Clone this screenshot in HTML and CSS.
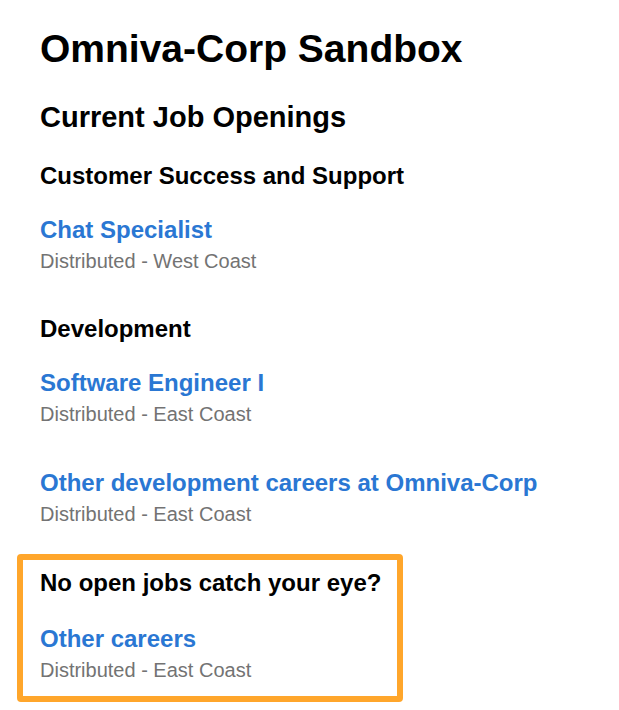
FILE: index.html
```html
<!DOCTYPE html>
<html lang="en">
<head>
<meta charset="utf-8">
<title>Omniva-Corp Sandbox</title>
<link rel="stylesheet" href="styles.css">
</head>
<body>
<main class="page">
  <h1 class="title">Omniva-Corp Sandbox</h1>
  <h2 class="subtitle">Current Job Openings</h2>

  <section class="dept">
    <h3 class="dept-name">Customer Success and Support</h3>
    <div class="job">
      <a class="job-link" href="#">Chat Specialist</a>
      <div class="job-loc">Distributed - West Coast</div>
    </div>
  </section>

  <section class="dept">
    <h3 class="dept-name">Development</h3>
    <div class="job">
      <a class="job-link" href="#">Software Engineer I</a>
      <div class="job-loc">Distributed - East Coast</div>
    </div>
    <div class="job">
      <a class="job-link" href="#">Other development careers at Omniva-Corp</a>
      <div class="job-loc">Distributed - East Coast</div>
    </div>
  </section>

  <section class="dept highlight">
    <h3 class="dept-name">No open jobs catch your eye?</h3>
    <div class="job">
      <a class="job-link" href="#">Other careers</a>
      <div class="job-loc">Distributed - East Coast</div>
    </div>
  </section>
</main>
</body>
</html>
```

FILE: styles.css
```css
* { box-sizing: border-box; }
html, body { margin: 0; padding: 0; background: #ffffff; }
body {
  font-family: "Liberation Sans", Arial, Helvetica, sans-serif;
  color: #000000;
}
.page {
  display: flex;
  flex-direction: column;
  align-items: flex-start;
  padding: 0 17px 0 17px;
}
.title {
  margin: 27px 0 0 0;
  padding-left: 23px;
  font-size: 39px;
  line-height: 44px;
  font-weight: 700;
}
.subtitle {
  margin: 29px 0 0 0;
  padding-left: 23px;
  font-size: 29px;
  line-height: 34px;
  font-weight: 700;
}
.dept {
  display: flex;
  flex-direction: column;
  padding-left: 23px;
  margin-top: 28px;
}
.dept-name {
  margin: 0;
  font-size: 24px;
  line-height: 28px;
  font-weight: 700;
  white-space: nowrap;
}
.job {
  display: flex;
  flex-direction: column;
  margin-top: 26px;
}
.job + .job { margin-top: 43px; }
.job-link {
  color: #2a77d3;
  text-decoration: none;
  font-size: 24px;
  line-height: 28px;
  font-weight: 700;
  white-space: nowrap;
}
.job-loc {
  margin-top: 5px;
  color: #737373;
  font-size: 20px;
  line-height: 24px;
}
.dept + .dept { margin-top: 42px; }
.dept + .highlight { margin-top: 28px; }
.highlight {
  width: 386px;
  border: 6px solid #ffa62b;
  border-radius: 4px;
  padding: 9px 17px 14px 17px;
}
.highlight .job { margin-top: 28px; }
```
